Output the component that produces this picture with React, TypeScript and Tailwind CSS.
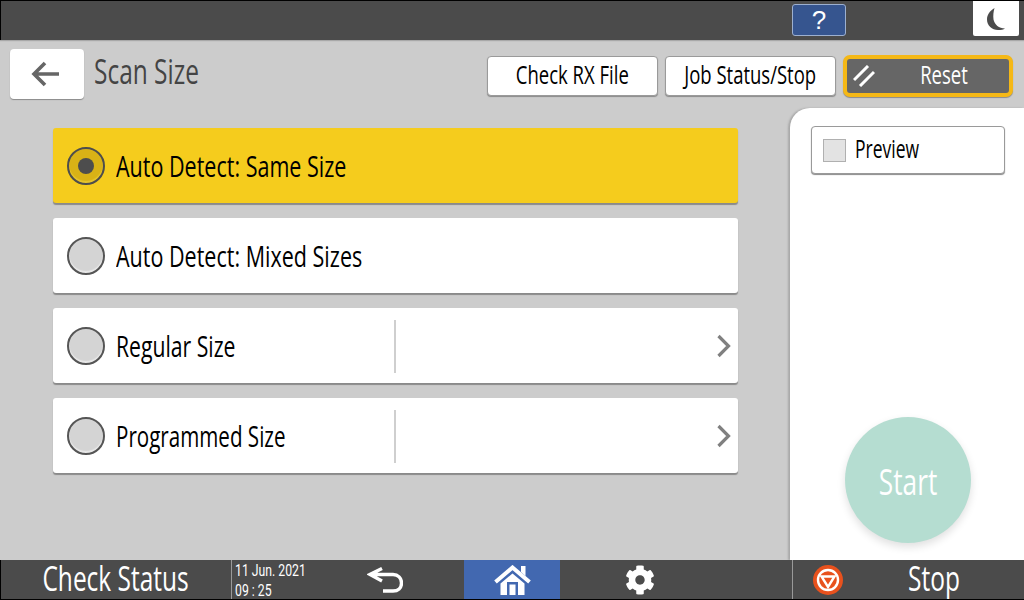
import React from "react";
import { FaCog } from "react-icons/fa";

const font = "font-['Open_Sans','Noto_Sans',sans-serif]";

function Radio({ on }: { on?: boolean }) {
  return (
    <div className={`flex h-[38px] w-[38px] shrink-0 items-center justify-center rounded-full border-2 ${on ? "border-[#4d4d4d] bg-[#d9b216] shadow-[inset_0_-2px_1px_#e6c52e]" : "border-[#555555] bg-[#d4d4d4] shadow-[inset_0_-2px_1px_#e8e8e8]"}`}>
      {on && <div className="h-[16px] w-[16px] rounded-full bg-[#4d4d4d]" />}
    </div>
  );
}

function Option({ label, on, more, narrow }: { label: string; on?: boolean; more?: boolean; narrow?: string }) {
  return (
    <div className={`flex h-[75px] items-center rounded-[3px] pl-[14px] pr-[6px] shadow-[0_2px_1px_#8a8a8a] ${on ? "bg-[#f5cc1d]" : "bg-white"}`}>
      <Radio on={on} />
      <div className="ml-[11px] w-[278px] shrink-0 pt-[3px]">
        <span className={`inline-block origin-left whitespace-nowrap text-[29px] leading-none text-black ${narrow ?? "scale-x-[0.742]"}`}>{label}</span>
      </div>
      {more && (
        <>
          <div className="mt-[1px] h-[53px] w-[2px] bg-[#cfcfcf]" />
          <svg viewBox="0 0 16 24" className="ml-auto h-[24px] w-[16px]" fill="none" stroke="#808080" strokeWidth="3.2">
            <path d="M2.5 2 L12.5 12 L2.5 22" />
          </svg>
        </>
      )}
    </div>
  );
}

function TopButton({ label }: { label: string }) {
  return (
    <div className="flex h-[40px] w-[171px] items-center justify-center rounded-[4px] border border-[#9a9a9a] bg-white pb-[4px] shadow-[0_1px_1px_#8a8a8a]">
      <span className="inline-block scale-x-[0.74] whitespace-nowrap text-[25px] leading-none text-black">{label}</span>
    </div>
  );
}

export default function App() {
  return (
    <div className={`flex h-[600px] w-[1024px] flex-col overflow-hidden bg-[#cccccc] ${font}`}>
      {/* status bar */}
      <div className="flex h-[40px] shrink-0 items-start justify-end border-l border-t border-black bg-[#4b4b4b] pr-[5px] shadow-[0_1px_1px_#a8a8a8]">
        <div className="mt-[3px] flex h-[32px] w-[54px] items-center justify-center rounded-[3px] border border-[#9db0d0] bg-[#36558f]">
          <span className="font-['Liberation_Sans',sans-serif] text-[26px] leading-none text-white">?</span>
        </div>
        <div className="ml-[127px] flex h-[35px] w-[46px] items-center justify-center rounded-b-[2px] bg-white">
          <svg viewBox="0 0 18 22" className="h-[22px] w-[18px]">
            <path d="M7.500 0 C2.500 3 0 7 0 11.500 C0 17.500 5 22 11 22 C14 22 16.500 21.500 18 20.500 C12 20.500 7.500 16.500 6.500 11.500 C6 7.500 6.500 3.500 7.500 0 Z" fill="#4b4b4b" />
          </svg>
        </div>
      </div>

      {/* header */}
      <div className="flex h-[68px] shrink-0 items-start">
        <div className="ml-[10px] mt-[9px] flex h-[50px] w-[74px] items-center justify-center rounded-[4px] bg-white shadow-[0_1px_1px_#8a8a8a]">
          <svg viewBox="0 0 30 26" className="-ml-[3px] h-[26px] w-[30px]" fill="none" stroke="#666666" strokeWidth="3.6">
            <path d="M28 13 H4 M14 2 L3 13 L14 24" />
          </svg>
        </div>
        <div className="ml-[10px] mt-[11px] w-[220px]">
          <span className="inline-block origin-left scale-x-[0.72] whitespace-nowrap text-[34px] leading-[40px] text-[#444444]">Scan Size</span>
        </div>
        <div className="ml-auto mr-[11px] mt-[16px] flex items-start gap-[7px]">
          <TopButton label="Check RX File" />
          <TopButton label="Job Status/Stop" />
          <div className="-mt-[1px] flex h-[42px] w-[170px] items-center rounded-[7px] border-[4px] border-[#f5b816] bg-[#666666] pl-[6px] shadow-[0_1px_1px_#8a8a8a]">
            <svg viewBox="0 0 22 22" className="h-[22px] w-[22px]" fill="none" stroke="#ffffff" strokeWidth="3">
              <path d="M1 15 L15 1 M7 21 L21 7" />
            </svg>
            <span className="mb-[4px] ml-[25px] inline-block w-[88px] scale-x-[0.74] whitespace-nowrap text-center text-[25px] leading-none text-white">Reset</span>
          </div>
        </div>
      </div>

      {/* body */}
      <div className="flex min-h-0 flex-1">
        <div className="flex flex-1 flex-col gap-[15px] pl-[53px] pr-[52px] pt-[20px]">
          <Option label="Auto Detect: Same Size" on />
          <Option label="Auto Detect: Mixed Sizes" />
          <Option label="Regular Size" more narrow="scale-x-[0.73]" />
          <Option label="Programmed Size" more narrow="scale-x-[0.71]" />
        </div>
        <div className="flex w-[234px] shrink-0 flex-col items-start rounded-tl-[20px] bg-white pl-[21px] pt-[18px] shadow-[-2px_0_2px_#a8a8a8]">
          <div className="flex h-[48px] w-[194px] items-center rounded-[4px] border border-[#9a9a9a] bg-white pl-[11px] shadow-[0_1px_1px_#8a8a8a]">
            <div className="h-[23px] w-[23px] border border-[#b0b0b0] bg-[#e3e3e3]" />
            <span className="mb-[4px] ml-[9px] inline-block origin-left scale-x-[0.70] whitespace-nowrap text-[25px] leading-none text-black">Preview</span>
          </div>
          <div className="ml-[34px] mt-[243px] flex h-[126px] w-[126px] items-center justify-center rounded-full bg-[#b5ddd1] pt-[4px] shadow-[0_4px_8px_#e0e0e0]">
            <span className="inline-block scale-x-[0.73] text-[36px] leading-none text-white">Start</span>
          </div>
        </div>
      </div>

      {/* bottom bar */}
      <div className="flex h-[40px] shrink-0 items-stretch border-b border-l border-black bg-[#4b4b4b] text-white">
        <div className="flex w-[231px] items-center justify-center border-r border-[#999999] pb-[3px]">
          <span className="inline-block scale-x-[0.72] whitespace-nowrap text-[34px] leading-none">Check Status</span>
        </div>
        <div className="flex w-[117px] items-center pl-[3px]">
          <span className="inline-block origin-left scale-x-[0.72] whitespace-nowrap font-['Roboto',sans-serif] text-[17px] leading-[20px]">
            11 Jun. 2021
            <br />
            09 : 25
          </span>
        </div>
        <div className="flex w-[115px] items-center pl-[18px]">
          <svg viewBox="0 0 36 26" className="h-[26px] w-[36px]" fill="none" stroke="#ffffff" strokeWidth="3.400">
            <path d="M15 1.500 L3 7.500 L15 14 M3 7.500 H26 C31 7.500 34.500 11 34.500 16 C34.500 21 31 24 26 24 H16" />
          </svg>
        </div>
        <div className="flex w-[96px] items-center justify-center bg-[#4268b0]">
          <svg viewBox="0 0 37 30" className="h-[30px] w-[37px]">
            <path d="M1.500 17 L18.500 2.500 L35.500 17" fill="none" stroke="#ffffff" strokeWidth="4" />
            <path d="M27 1 H31.500 V11 L27 7 Z" fill="#ffffff" />
            <path fillRule="evenodd" d="M6.500 18.500 L18.500 8.500 L30.500 18.500 V30 H24 V17 H13 V30 H6.500 Z M15.500 19.500 H21.500 V30 H15.500 Z" fill="#ffffff" />
          </svg>
        </div>
        <div className="flex w-[233px] items-center border-r border-[#999999] pl-[65px]">
          <FaCog className="h-[30px] w-[30px] text-white" />
        </div>
        <div className="flex flex-1 items-center pl-[20px]">
          <svg viewBox="0 0 30 30" className="h-[30px] w-[30px]">
            <circle cx="15" cy="15" r="15" fill="#e8511d" />
            <circle cx="15" cy="15" r="10" fill="none" stroke="#ffffff" strokeWidth="2.400" />
            <path d="M8.500 11.500 H21.500 L15 22 Z" fill="none" stroke="#ffffff" strokeWidth="2.400" />
          </svg>
          <span className="mb-[3px] ml-[55px] inline-block w-[72px] scale-x-[0.72] text-center text-[34px] leading-none">Stop</span>
        </div>
      </div>
    </div>
  );
}
